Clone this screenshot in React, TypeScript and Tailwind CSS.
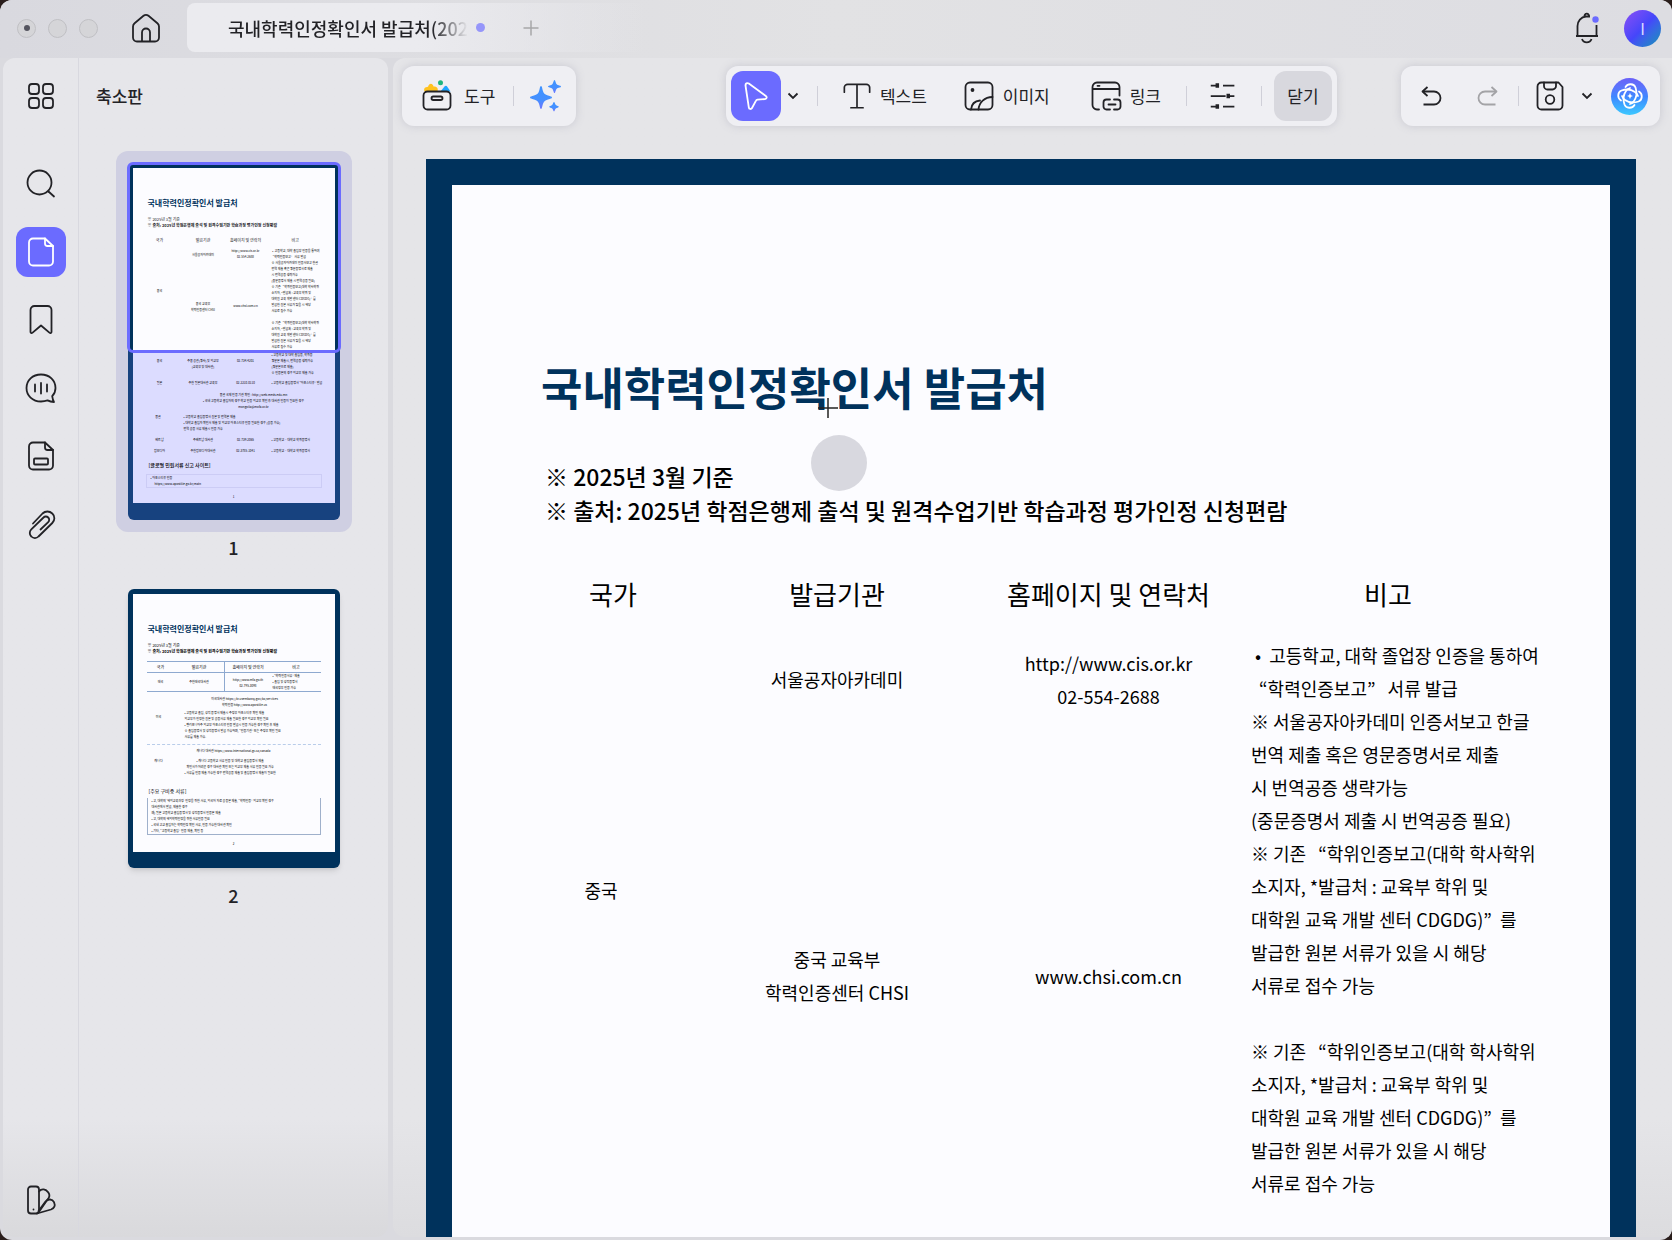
import React, { ReactNode } from 'react'

interface IconProps {
  size?: number
  className?: string
  children: ReactNode
}

// Every line icon is drawn on a 32px grid
const Icon = ({ size = 32, className = '', children }: IconProps) => (
  <svg
    width={size}
    height={size}
    viewBox="0 0 32 32"
    fill="none"
    stroke="currentColor"
    strokeWidth={1.8}
    strokeLinecap="round"
    strokeLinejoin="round"
    className={`shrink-0 ${className}`}
    aria-hidden="true"
  >
    {children}
  </svg>
)

const HomeIcon = () => (
  <Icon>
    <path d="M3 14.500c0-1.300.6-2.500 1.600-3.300L13.500 3.800c1.500-1.200 3.500-1.200 5 0l8.900 7.400c1 .8 1.600 2 1.600 3.300V25.500a4 4 0 0 1-4 4H7a4 4 0 0 1-4-4z" />
    <path d="M12 29v-8.500a4 4 0 0 1 8 0V29" />
  </Icon>
)

const GridIcon = () => (
  <Icon>
    <rect x="4" y="4" width="10" height="10" rx="3" />
    <rect x="18" y="4" width="10" height="10" rx="3" />
    <rect x="4" y="18" width="10" height="10" rx="3" />
    <rect x="18" y="18" width="10" height="10" rx="3" />
  </Icon>
)

const SearchIcon = () => (
  <Icon>
    <circle cx="14.500" cy="14.500" r="12" />
    <path d="M23.500 23.500 29 28.500" />
  </Icon>
)

const PageIcon = () => (
  <Icon>
    <path d="M20 2.500H8a4 4 0 0 0-4 4v19a4 4 0 0 0 4 4h16a4 4 0 0 0 4-4V10z" />
    <path d="M20 2.500v5a2.500 2.500 0 0 0 2.500 2.500H28" />
  </Icon>
)

const BookmarkIcon = () => (
  <Icon>
    <path d="M5.500 6a4 4 0 0 1 4-4h13a4 4 0 0 1 4 4v22c0 1-1 1.500-1.800.9L16 21.500 7.300 28.900c-.8.6-1.800.1-1.800-.9z" />
  </Icon>
)

const CommentIcon = () => (
  <Icon>
    <path d="M29 30c-2.500 0-5-.8-6.500-1.600-2 .7-4.200 1.100-6.500 1.100C7.500 29.500 1.500 23.500 1.500 16S7.500 2.500 16 2.500 30.500 8.500 30.500 16c0 3.500-1.200 6-3.300 8.200C27.500 26.500 28 28.500 29 30z" />
    <path d="M10 12.500v7M16 11v10.500M22 12.500v7" />
  </Icon>
)

const FieldIcon = () => (
  <Icon>
    <path d="M20 2.500H8a4 4 0 0 0-4 4v19a4 4 0 0 0 4 4h16a4 4 0 0 0 4-4V10z" />
    <path d="M20 2.500v5a2.500 2.500 0 0 0 2.500 2.500H28" />
    <rect x="9" y="18.500" width="14" height="6" rx="1" />
  </Icon>
)

const ClipIcon = () => (
  <Icon>
    <path d="M8 15.500 17.500 5.500a7 7 0 0 1 9.800 0 6.500 6.500 0 0 1 0 9.500L13.500 28.500a5 5 0 0 1-7.200 0 5 5 0 0 1 0-7.200L18.500 9.500a3.300 3.300 0 0 1 4.700 0 3.300 3.300 0 0 1 0 4.700L15.500 21.500" />
  </Icon>
)

const SwatchIcon = () => (
  <Icon>
    <rect x="3" y="2.500" width="11" height="27" rx="3" />
    <path d="M14 7.500c2.800-3.500 6.800-2 8.800.3 1.600 1.800 2.200 4 .8 6.200L13.500 28.500" />
    <path d="m13.500 27 7-9.500c2.500-2.800 6.800-2.800 8.500.7 1.500 3.500.5 6-3 7.300L12 29.500" />
    <path d="M8.500 25.500v.1" />
  </Icon>
)

const BellIcon = () => (
  <svg width="26" height="32" viewBox="0 0 26 32" fill="none" stroke="currentColor" strokeWidth={1.8} aria-hidden="true">
    <path d="M2 24h22M3.500 24V14c0-5 3.500-9 8.500-9.500h4M22.500 24V13M8 27c1.500 4.500 8 4.500 9.500 0M10.500 4.500a2.300 2.300 0 1 1 4.500 0" />
    <circle cx="21.500" cy="7.500" r="3.200" fill="#6b6bff" stroke="none" />
  </svg>
)

const ToolboxIcon = () => (
  <svg width="30" height="32" viewBox="0 0 30 32" fill="none" aria-hidden="true">
    <path d="M2.500 11.500c-1.200-3 .5-4.500 3.500-4.700 1-3.800 4.500-4.300 5.500-.3 3.500 0 5 1.500 4 5z" fill="#ffc21f" />
    <circle cx="18.500" cy="2.800" r="2.500" fill="#1fb57f" />
    <path d="m18.500 11.500 4-5c1-1 2-.8 2.800.2l3.200 4.800z" fill="#1fa5ff" />
    <rect x="1.500" y="11.500" width="27" height="18" rx="4" stroke="#222226" strokeWidth="1.800" />
    <rect x="9.500" y="16.500" width="11" height="3.500" rx="1.700" stroke="#222226" strokeWidth="1.800" />
  </svg>
)

const SparkleIcon = () => (
  <svg width="32" height="32" viewBox="0 0 32 32" aria-hidden="true">
    <defs>
      <linearGradient id="spark" x1="0" y1="0" x2="0" y2="1">
        <stop offset="0" stopColor="#3f93ff" />
        <stop offset="0.6" stopColor="#4590ff" />
        <stop offset="1" stopColor="#6f74ff" />
      </linearGradient>
    </defs>
    <g fill="url(#spark)">
      <path d="M11 6c1.200 0 1 2.500 2 5.200 1 2.700 2 3.200 5 4.300 2.500.9 4 .9 4 2s-1.500 1.100-4 2c-3 1.100-4 1.600-5 4.300-1 2.700-.8 5.200-2 5.200s-1-2.500-2-5.200c-1-2.700-2-3.200-5-4.300-2.500-.9-4-.9-4-2s1.500-1.100 4-2c3-1.100 4-1.600 5-4.300C10 8.500 9.800 6 11 6z" />
      <path d="M24.500 0c.9 0 1 3 2.200 4.200C28 5.500 31 5.300 31 6.500s-3 1-4.300 2.200c-1.200 1.200-1.300 4.300-2.200 4.300s-1-3.100-2.200-4.300C21 7.500 18 7.600 18 6.500s3-1 4.300-2.300C23.500 3 23.600 0 24.500 0z" />
      <path d="M24 22c.7 0 .9 2 1.800 2.900.9.900 3 .9 3 1.900s-2.100 1-3 1.800c-.9.900-1.100 2.900-1.800 2.900s-.9-2-1.800-2.900c-.9-.8-3-.8-3-1.800s2.100-1 3-1.900c.9-.9 1.100-2.900 1.800-2.900z" />
    </g>
  </svg>
)

const PointerIcon = () => (
  <Icon>
    <path d="M5.500 5.500c-.2-2 1.600-3 3.300-1.900L25.800 16c1.500 1.200 1 2.800-.8 3l-7.500.6c-.7.100-1.200.4-1.500 1L12 28c-.9 1.600-3 1.200-3.200-.7z" />
  </Icon>
)

const Chevron = () => (
  <svg width="12" height="8" viewBox="0 0 12 8" fill="none" stroke="currentColor" strokeWidth={1.8} aria-hidden="true">
    <path d="m1.500 1.500 4.500 4.500 4.500-4.500" />
  </svg>
)

const TypeIcon = () => (
  <Icon size={30}>
    <path d="M2.500 12V7a3.500 3.500 0 0 1 3.500-3.500h20A3.500 3.500 0 0 1 29.500 7v5M16 3.500v25M9.500 28.500h13" />
  </Icon>
)

const ImageIcon = () => (
  <Icon>
    <rect x="2.500" y="2.500" width="27" height="27" rx="4.500" />
    <path d="M8 29.500c.5-5 3.500-8.500 9-9M15.500 29.500c.5-7 6-12.500 14-12.500" />
    <circle cx="9.500" cy="10" r="1" fill="currentColor" />
  </Icon>
)

const LinkIcon = () => (
  <Icon>
    <path d="M9 29.500H7A4.500 4.500 0 0 1 2.500 25V7A4.500 4.500 0 0 1 7 2.500h18A4.500 4.500 0 0 1 29.500 7v8.500M2.500 9h27M7.500 5.800h2" />
    <path d="M20 19.500h-3.500a3 3 0 0 0-3 3v4a3 3 0 0 0 3 3H20M24 19.500h3.500a3 3 0 0 1 3 3v4a3 3 0 0 1-3 3H24M18.500 24.500h7" />
  </Icon>
)

const SlidersIcon = () => (
  <Icon size={28}>
    <path d="M2 4h9M16 4h13M2 16h17M24 16h5M2 28h9M16 28h13" strokeWidth={2} strokeLinecap="butt" />
    <path d="M9.500 1.500v5M22 13.500v5M9.500 25.500v5" strokeWidth={4} strokeLinecap="butt" />
  </Icon>
)

const UndoIcon = ({ className = '' }: { className?: string }) => (
  <svg
    width="22"
    height="22"
    viewBox="0 0 22 22"
    fill="none"
    stroke="currentColor"
    strokeWidth={1.8}
    strokeLinejoin="round"
    className={className}
    aria-hidden="true"
  >
    <path d="M2 6.500h11a6.300 6.300 0 0 1 0 13H2.500" />
    <path d="M6.500 2 1.500 6.500l5 4.500" />
  </svg>
)

const SaveIcon = () => (
  <Icon>
    <path d="M7.500 2.500h17L28.500 7v18.500a4 4 0 0 1-4 4h-17a4 4 0 0 1-4-4v-19a4 4 0 0 1 4-4z" />
    <path d="M10 2.500V6a3.500 3.500 0 0 0 3.500 3.500h5A3.500 3.500 0 0 0 22 6V2.500" />
    <circle cx="16" cy="19.500" r="4.300" />
  </Icon>
)

const AiIcon = () => (
  <svg width="26" height="26" viewBox="0 0 26 26" fill="none" stroke="white" strokeWidth="1.800" strokeLinecap="round" aria-hidden="true">
    <path d="M8.500 4c2.500-4 8.500-3.500 10 .5 1.500 4.500 1 10-1.500 13.500-1 1.500-2.500 2.500-4 3" />
    <path d="M22 8.500c4 2.500 3.500 8.500-.5 10-4.500 1.500-10 1-13.500-1.500-1.500-1-2.500-2.500-3-4" />
    <path d="M17.500 22c-2.500 4-8.500 3.500-10-.5-1.500-4.500-1-10 1.500-13.500 1-1.500 2.500-2.500 4-3" />
    <path d="M4 17.500c-4-2.500-3.500-8.500.5-10 4.500-1.500 10-1 13.500 1.500 1.500 1 2.500 2.500 3 4" />
    <path d="M13 9.500c.4 2.500 1 3.100 3.500 3.500-2.500.4-3.100 1-3.500 3.500-.4-2.500-1-3.100-3.500-3.500 2.500-.4 3.100-1 3.500-3.500z" fill="white" stroke="none" />
  </svg>
)

const Divider = () => <span className="h-5 w-px shrink-0 bg-[#cfcfd8]" />

const TitleBar = () => (
  <header className="flex h-[58px] shrink-0 items-start bg-linear-to-r from-[#d9d9df] via-[#e2e2e4] to-[#dddde2] pr-[11px]">
    <div className="flex h-14 items-center gap-3 pl-[17px]">
      <button aria-label="창 닫기" className="flex size-[19px] items-center justify-center rounded-full border border-[#c0c0c4] bg-[#d5d5d8]">
        <span className="size-[6px] rounded-full bg-[#55555f]" />
      </button>
      <button aria-label="최소화" className="size-[19px] rounded-full border border-[#c0c0c4] bg-[#d5d5d8]" />
      <button aria-label="최대화" className="size-[19px] rounded-full border border-[#c0c0c4] bg-[#d5d5d8]" />
      <button aria-label="홈" className="ml-5"><HomeIcon /></button>
    </div>
    <div className="mt-[3px] ml-[25px] flex h-[49px] w-[460px] items-center rounded-lg bg-linear-to-r from-[#ebebef] from-50% to-[#ebebef]/0 pl-[41px]">
      <span className="bg-linear-to-r from-[#222226] from-85% to-transparent bg-clip-text text-lg leading-6 font-medium whitespace-nowrap text-transparent">
        국내학력인정확인서 발급처(202
      </span>
      <span className="ml-2 size-[9px] shrink-0 rounded-full bg-[#9696fa]" />
      <button aria-label="새 탭" className="ml-[37px] text-[#a6a6a8]">
        <svg width="18" height="18" viewBox="0 0 18 18" stroke="currentColor" strokeWidth="1.500" aria-hidden="true">
          <path d="M9 1.500v15M1.500 9h15" />
        </svg>
      </button>
    </div>
    <div className="ml-auto flex h-14 items-center gap-6">
      <button aria-label="알림"><BellIcon /></button>
      <button className="size-[37px] rounded-full bg-linear-to-br from-[#8a4df5] via-[#4546fa] via-50% to-[#1390b4] text-base text-[#dcdcff]">I</button>
    </div>
  </header>
)

const railItems = [
  { label: '검색', icon: <SearchIcon /> },
  { label: '축소판', icon: <PageIcon />, active: true },
  { label: '책갈피', icon: <BookmarkIcon /> },
  { label: '댓글', icon: <CommentIcon /> },
  { label: '필드', icon: <FieldIcon /> },
  { label: '첨부 파일', icon: <ClipIcon /> },
]

const Rail = () => (
  <nav className="flex w-[76px] shrink-0 flex-col items-center border-r border-[#d8d8df] pt-[13px] pb-3">
    <button aria-label="모두 보기" className="flex size-[50px] items-center justify-center"><GridIcon /></button>
    <div className="mt-[38px] flex flex-col gap-[18px]">
      {railItems.map((item) => (
        <button
          key={item.label}
          aria-label={item.label}
          className={`flex size-[50px] items-center justify-center rounded-xl ${item.active ? 'bg-[#6b6bff] text-white' : ''}`}
        >
          {item.icon}
        </button>
      ))}
    </div>
    <button aria-label="색상" className="mt-auto flex size-[50px] items-center justify-center"><SwatchIcon /></button>
  </nav>
)

const remarks = [
  ' •  고등학교, 대학 졸업장 인증을 통하여',
  '  “학력인증보고”   서류 발급',
  '※ 서울공자아카데미 인증서보고 한글',
  '번역 제출 혹은 영문증명서로 제출',
  '시 번역공증 생략가능',
  '(중문증명서 제출 시 번역공증 필요)',
  '※ 기존   “학위인증보고(대학 학사학위',
  '소지자, *발급처 : 교육부 학위 및',
  '대학원 교육 개발 센터 CDGDG)”  를',
  '발급한 원본 서류가 있을 시 해당',
  '서류로 접수 가능',
  ' ',
  '※ 기존   “학위인증보고(대학 학사학위',
  '소지자, *발급처 : 교육부 학위 및',
  '대학원 교육 개발 센터 CDGDG)”  를',
  '발급한 원본 서류가 있을 시 해당',
  '서류로 접수 가능',
]

const ThumbHead = () => (
  <div className="pt-[30px] pl-[15px]">
    <p className="text-[8px] leading-[10px] font-bold text-[#00325c]">국내학력인정확인서 발급처</p>
    <p className="mt-2 text-[4px] leading-[6px]">※ 2025년 3월 기준</p>
    <p className="text-[4px] leading-[6px] font-bold">※ 출처: 2025년 학점은행제 출석 및 원격수업기반 학습과정 평가인정 신청편람</p>
  </div>
)

const thumbGrid = 'grid grid-cols-[54px_33px_52px_63px] text-center'

const ThumbOne = () => (
  <div className="overflow-hidden rounded-md bg-[#17427f]">
    <div className="border-[5px] border-b-0 border-[#00325c] bg-[#fcfcff]">
      <ThumbHead />
      <div className={`${thumbGrid} mt-2 text-[4px] leading-[8px]`}>
        <span>국가</span>
        <span className="-mx-2">발급기관</span>
        <span className="-mx-2">홈페이지 및 연락처</span>
        <span className="pl-5 text-left">비고</span>
      </div>
      <div className={`${thumbGrid} mt-1 h-[103px] text-[3px] leading-[6px] text-black`}>
        <span className="pt-[40px]">중국</span>
        <div className="-mx-2">
          <p className="pt-1">서울공자아카데미</p>
          <p className="mt-[43px]">중국 교육부</p>
          <p>학력인증센터 CHSI</p>
        </div>
        <div className="-mx-2">
          <p>http://www.cis.or.kr</p>
          <p>02-554-2688</p>
          <p className="mt-[43px]">www.chsi.com.cn</p>
        </div>
        <div className="text-left">
          {remarks.map((line, i) => <p key={i} className="whitespace-pre">{line}</p>)}
        </div>
      </div>
    </div>
    <div className="mx-[5px] h-[152px] bg-[#dcdcff] pt-px text-[3px] leading-[6px] text-black">
      <div className={thumbGrid}>
        <span className="pt-[6px]">중국</span>
        <div className="-mx-2 pt-[6px]"><p>주중 공관(영사) 및 외교부</p><p>(교육부 및 대사관)</p></div>
        <span className="pt-[6px]">02-734-4201</span>
        <div className="text-left"><p>• 고등학교 및 대학 졸업증, 학위증</p><p>영문본 제출시, 번역공증 생략가능</p><p>(영문본으로 제출)</p><p>※ 인증본의 경우 외교부 제출 가능</p></div>
      </div>
      <div className={`${thumbGrid} mt-1`}>
        <span>일본</span>
        <span className="-mx-2">주한 일본대사관 교육부</span>
        <span>02-2210-0110</span>
        <span className="-mr-1 text-left">• 고등학교 졸업증명서 “아포스티유” 발급</span>
      </div>
      <div className="mt-[6px] pl-10 text-center">
        <p>몽골 국제 인증 기관 확인 : http://web.meds.edu.mn</p>
        <p>• 국내 고등학교 졸업자의 경우 학교 인증 외교부 확인 후 대사관 인증이 필요한 경우</p>
        <p>mongolia@mofa.or.kr</p>
      </div>
      <div className="mt-1 flex">
        <span className="w-[51px] text-center">몽골</span>
        <div>
          <p>• 고등학교 졸업증명서 원본 및 번역본 제출</p>
          <p>• 대학교 졸업자 확인서 제출 및 외교부 아포스티유 인증 필요한 경우 (공증 가능)</p>
          <p>번역 공증 서류 제출시 인증 가능</p>
        </div>
      </div>
      <div className={`${thumbGrid} mt-[5px] gap-y-[5px]`}>
        <span>베트남</span><span className="-mx-2">주베트남 대사관</span><span>02-739-2065</span><span className="text-left">• 고등학교 · 대학교 학위증명서</span>
        <span>캄보디아</span><span className="-mx-2">주한캄보디아대사관</span><span>02-3785-1041</span><span className="text-left">• 고등학교 · 대학교 학위증명서</span>
      </div>
      <p className="mt-2 pl-4 text-[5px] font-medium">[글로벌 민원서류 신고 사이트]</p>
      <div className="mx-[13px] mt-[6px] border border-[#ccccf5] pl-1">
        <p>• 아포스티유 인증</p>
        <p className="pl-1">https://www.apostille.go.kr/main</p>
      </div>
      <p className="mt-[6px] text-center">1</p>
    </div>
    <div className="h-[17px]" />
  </div>
)

const ThumbTwo = () => (
  <div className="overflow-hidden rounded-md bg-[#00325c] px-[5px] pt-[5px] pb-4 shadow-md">
    <div className="h-[258px] bg-[#fcfcff] text-[3px] leading-[6px] text-black">
      <ThumbHead />
      <div className="mx-[14px] mt-[7px] grid grid-cols-[28px_50px_47px_49px] border-t border-[#8ea9d0] text-center">
        <span className="border-b border-[#8ea9d0] text-[4px] leading-[10px]">국가</span>
        <span className="border-r border-b border-[#8ea9d0] text-[4px] leading-[10px]">발급기관</span>
        <span className="border-b border-[#8ea9d0] text-[4px] leading-[10px]">홈페이지 및 연락처</span>
        <span className="border-b border-[#8ea9d0] text-[4px] leading-[10px]">비고</span>
        <span className="border-b border-[#8ea9d0] pt-[6px]">태국</span>
        <span className="border-r border-b border-[#8ea9d0] pt-[6px]">주한태국대사관</span>
        <div className="border-b border-[#8ea9d0] pt-1"><p>http://www.mfa.go.th</p><p>02-795-3098</p></div>
        <div className="border-b border-[#8ea9d0] pl-px text-left"><p>• “학력인증서류” 제출</p><p>• 졸업 및 성적증명서</p><p>태국정부 인증 가능</p></div>
      </div>
      <div className="mt-1 pl-[22px] text-center">
        <p>미국대사관 https://kr.usembassy.gov/ko/services</p>
        <p>학력인증 http://www.apostille.us</p>
      </div>
      <div className="mt-[2px] flex">
        <span className="w-[52px] pt-1 text-center">미국</span>
        <div>
          <p>• 고등학교 졸업, 성적 증명서 제출시 주정부 아포스티유 확인 제출</p>
          <p>외교부가 인정한 원본 및 공증서류 제출 필요한 경우 외교부 확인 필요</p>
          <p>• 캘리포니아주 외교부 아포스티유 인증 발급시 인증 가능한 경우 확인 후 제출</p>
          <p>※ 졸업증명서 및 성적증명서 발급 가능하며, “인증기관” 또는 주정부 확인 필요</p>
          <p>서류를 제출 가능.</p>
        </div>
      </div>
      <div className="mx-[14px] mt-1 border-t border-dashed border-[#b9cdea] pt-[3px] text-center">
        <p>캐나다 대사관 https://www.international.gc.ca/canada</p>
      </div>
      <div className="mt-1 flex">
        <span className="w-[52px] text-center">캐나다</span>
        <div className="text-center">
          <p>• 캐나다 고등학교 서류 인증 및 대학교 졸업증명서 제출</p>
          <p>확인서가 어려운 경우 대사관 확인 또는 외교부 제출 서류 인증 필요 가능</p>
          <p>• 서류를 인증 제출 가능한 경우 번역공증 제출 및 졸업증명서 제출이 필요한</p>
        </div>
      </div>
      <p className="mt-3 pl-4 text-[5px] leading-[6px]">[주요 구비중 서류]</p>
      <div className="mx-[14px] mt-1 border border-t-0 border-[#9fb0cb] px-1 whitespace-nowrap">
        <p>• 고, 대학의 ‘해외교육과정’ 인정을 위한 서류, 외국어 자료 공증본 제출, “학력인증” 외교부 확인 경우</p>
        <p>대사관에서 발급, 제출한 경우</p>
        <p>예) 일본 고등학교 졸업증명서 및 성적증명서 인증본 제출</p>
        <p>• 고, 대학의 해외학력인정을 위한 서류인증 필요</p>
        <p>• 국내 고교 졸업자는 학력인정 확인 서류, 인증 가능한 대사관 확인</p>
        <p>• 기타, “고등학교 졸업” 인증 제출, 확인 등</p>
      </div>
      <p className="mt-[6px] text-center">2</p>
    </div>
  </div>
)

const Thumbnails = () => (
  <aside className="flex min-w-0 flex-1 flex-col">
    <h2 className="h-[77px] pt-[26px] pl-[17px] text-[17px] leading-6 font-medium">축소판</h2>
    <div className="mt-4 flex flex-col items-center">
      <div className="relative rounded-xl bg-[#cfcfe2] px-3 pt-3 pb-3">
        <div className="w-[212px]"><ThumbOne /></div>
        <div className="absolute top-[11px] left-[11px] h-[191px] w-[214px] rounded-md border-[3px] border-[#6b6bff]" />
      </div>
      <p className="mt-[3px] text-lg leading-6 font-medium">1</p>
      <div className="mt-[30px] w-[212px]"><ThumbTwo /></div>
      <p className="mt-[15px] text-lg leading-6 font-medium">2</p>
    </div>
  </aside>
)

const barStyle = 'flex h-15 shrink-0 items-center rounded-xl bg-[#efeff3] shadow-[0_0_10px_#c8c8d0]'

const Toolbar = () => (
  <div className="flex shrink-0 items-center pt-2 pr-3 pl-[9px] text-[17px]">
    <div className={`${barStyle} pr-[14px] pl-5`}>
      <button className="flex items-center gap-3"><ToolboxIcon />도구</button>
      <span className="mr-4 ml-[18px] flex"><Divider /></span>
      <button aria-label="AI 도구"><SparkleIcon /></button>
    </div>
    <div className={`${barStyle} mr-16 ml-auto px-[5px]`}>
      <button aria-label="선택" className="flex size-[50px] items-center justify-center rounded-xl bg-[#6b6bff] text-white"><PointerIcon /></button>
      <button aria-label="선택 옵션" className="mx-[6px]"><Chevron /></button>
      <span className="mr-6 ml-3 flex"><Divider /></span>
      <button className="flex items-center gap-2"><TypeIcon />텍스트</button>
      <button className="ml-9 flex items-center gap-2"><ImageIcon />이미지</button>
      <button className="ml-10 flex items-center gap-2"><LinkIcon />링크</button>
      <span className="mr-[22px] ml-[25px] flex"><Divider /></span>
      <button aria-label="속성"><SlidersIcon /></button>
      <span className="mr-3 ml-6 flex"><Divider /></span>
      <button className="h-[50px] w-[58px] rounded-xl bg-[#d8d8de]">닫기</button>
    </div>
    <div className={`${barStyle} pr-3 pl-5`}>
      <button aria-label="실행 취소"><UndoIcon /></button>
      <button aria-label="다시 실행" className="ml-[33px] text-[#a3a3a6]"><UndoIcon className="-scale-x-100" /></button>
      <span className="mr-[15px] ml-5 flex"><Divider /></span>
      <button aria-label="저장"><SaveIcon /></button>
      <button aria-label="저장 옵션" className="ml-[15px]"><Chevron /></button>
      <button aria-label="AI 비서" className="ml-[18px] flex size-[37px] items-center justify-center rounded-full bg-linear-to-b from-[#6a60f8] via-[#3f86ff] to-[#3cc8ff]"><AiIcon /></button>
    </div>
  </div>
)

const Document = () => (
  <article className="relative mt-[33px] mr-9 ml-[33px] flex-1 border-[26px] border-b-0 border-[#00325c] bg-[#fcfcff] pt-[175px] pl-[78px] text-black">
    <h1 className="pl-[11px] text-[45px] leading-[54px] font-bold text-[#00325c]">국내학력인정확인서 발급처</h1>
    <div className="mt-[45px] pl-[15px] text-[23px] leading-[34px] font-medium">
      <p>※ 2025년 3월 기준</p>
      <p>※ 출처: 2025년 학점은행제 출석 및 원격수업기반 학습과정 평가인정 신청편람</p>
    </div>
    <table className="mt-[42px] w-[1019px] table-fixed text-center text-lg leading-[33px]">
      <colgroup>
        <col className="w-[154px]" />
        <col className="w-[306px]" />
        <col className="w-[237px]" />
        <col className="w-[322px]" />
      </colgroup>
      <thead>
        <tr className="h-[70px] text-[26px]">
          <th className="pb-[22px] pl-3 font-normal">국가</th>
          <th className="pb-[22px] font-normal">발급기관</th>
          <th className="pb-[22px] font-normal">홈페이지 및 연락처</th>
          <th className="pb-[22px] font-normal">비고</th>
        </tr>
      </thead>
      <tbody>
        <tr className="h-[81px]">
          <td rowSpan={2} className="pr-3 pb-[90px]">중국</td>
          <td>서울공자아카데미</td>
          <td>http://www.cis.or.kr<br />02-554-2688</td>
          <td rowSpan={2} className="pl-6 text-left align-top">
            {remarks.map((line, i) => <p key={i} className="whitespace-pre">{line}</p>)}
          </td>
        </tr>
        <tr className="h-[512px]">
          <td>중국 교육부<br />학력인증센터 CHSI</td>
          <td>www.chsi.com.cn</td>
        </tr>
      </tbody>
    </table>
    {/* crosshair pointer and the click highlight under it */}
    <svg className="absolute top-[213px] left-[366px]" width="20" height="20" viewBox="0 0 20 20" stroke="#222" strokeWidth="1.500" aria-hidden="true">
      <path d="M10 0v20M0 10h20" />
    </svg>
    <div className="absolute top-[250px] left-[359px] size-14 rounded-full bg-[#d8d8df]" />
  </article>
)

export default function App() {
  return (
    <div className="h-screen bg-[#2a1e1c] font-['Noto_Sans_CJK_KR','Noto_Sans',sans-serif] text-[#222226]">
      <div className="flex h-full flex-col overflow-hidden rounded-xl bg-[#dadadf] pb-[3px]">
        <TitleBar />
        <div className="flex min-h-0 flex-1 gap-[5px] pl-[3px]">
          <section className="flex w-[385px] shrink-0 overflow-hidden rounded-xl bg-linear-to-b from-[#e6e6ea] from-90% to-[#d9d9dc]">
            <Rail />
            <Thumbnails />
          </section>
          <main className="flex min-w-0 flex-1 flex-col overflow-hidden rounded-l-xl bg-linear-to-b from-[#e5e5e8] from-90% to-[#dcdcdf]">
            <Toolbar />
            <Document />
          </main>
        </div>
      </div>
    </div>
  )
}
